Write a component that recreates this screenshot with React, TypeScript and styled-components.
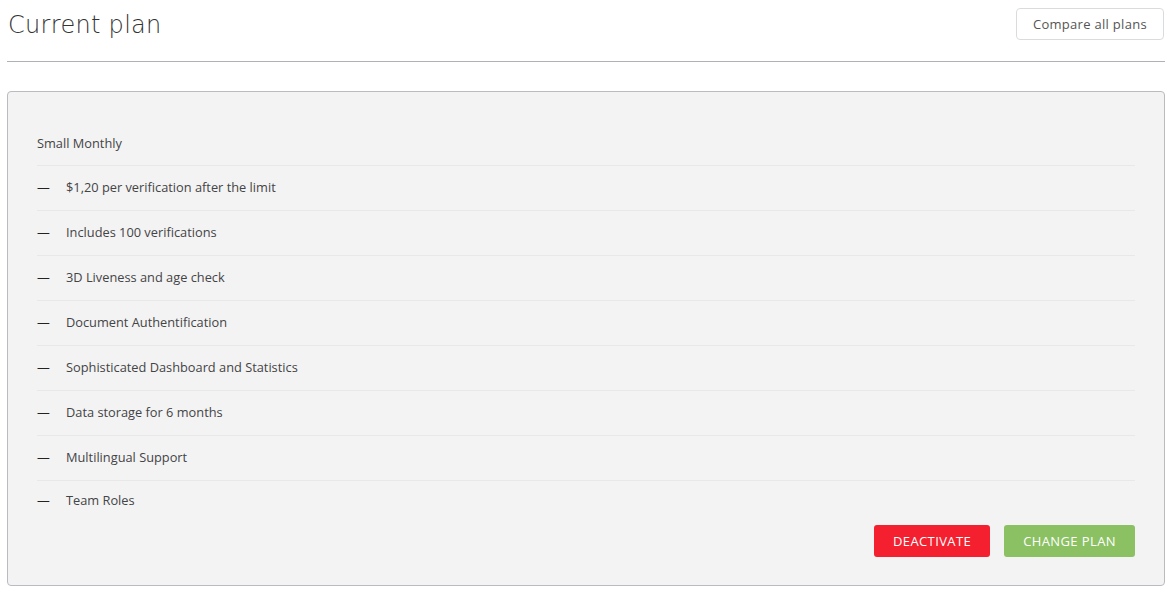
import React from 'react';
import styled, { createGlobalStyle } from 'styled-components';

const GlobalStyle = createGlobalStyle`
  html, body {
    margin: 0;
    padding: 0;
    background: #ffffff;
    font-family: 'Open Sans', 'DejaVu Sans', sans-serif;
    color: #444;
  }
`;

const Page = styled.div`
  padding: 0 7px;
`;

const Header = styled.div`
  display: flex;
  justify-content: space-between;
  align-items: flex-start;
  padding: 8px 1px 0 1px;
  height: 53px;
  border-bottom: 1px solid #aeb2b6;
`;

const Title = styled.h1`
  margin: 0;
  margin-top: 3px;
  font-family: 'DejaVu Sans', sans-serif;
  font-size: 24px;
  font-weight: 300;
  color: #333;
  letter-spacing: 0.3px;
`;

const OutlineButton = styled.button`
  height: 32px;
  padding: 0 16px;
  background: #fff;
  border: 1px solid #d9dcdf;
  border-radius: 4px;
  font-family: inherit;
  font-size: 13px;
  color: #555;
  letter-spacing: 0.3px;
  cursor: pointer;
`;

const Card = styled.div`
  margin-top: 29px;
  background: #f3f3f4;
  border: 1px solid #b8bcc0;
  border-radius: 4px;
  padding: 29px 29px 28px 29px;
`;

const Row = styled.div<{ $last?: boolean; $lift?: number }>`
  display: flex;
  align-items: center;
  height: ${(p) => (p.$last ? 40 : 45)}px;
  padding-bottom: ${(p) => p.$lift ?? 1}px;
  border-bottom: ${(p) => (p.$last ? 'none' : '1px solid #e8e8e9')};
  font-size: 12.8px;
  color: #444;
  box-sizing: border-box;
`;

const Dash = styled.span`
  width: 29px;
  color: #222;
`;

const Actions = styled.div`
  display: flex;
  justify-content: flex-end;
  gap: 14px;
  margin-top: 4px;
`;

const ActionButton = styled.button<{ $color: string }>`
  height: 32px;
  padding: 0 19px;
  border: none;
  border-radius: 3px;
  background: ${(p) => p.$color};
  color: #fff;
  font-family: inherit;
  font-size: 13px;
  letter-spacing: 0.4px;
  text-transform: uppercase;
  cursor: pointer;
`;

const features = [
  '$1,20 per verification after the limit',
  'Includes 100 verifications',
  '3D Liveness and age check',
  'Document Authentification',
  'Sophisticated Dashboard and Statistics',
  'Data storage for 6 months',
  'Multilingual Support',
  'Team Roles',
];

function App(): JSX.Element {
  return (
    <Page>
      <GlobalStyle />
      <Header>
        <Title>Current plan</Title>
        <OutlineButton>Compare all plans</OutlineButton>
      </Header>
      <Card>
        <Row>Small Monthly</Row>
        {features.map((f, i) => (
          <Row key={f} $lift={3} $last={i === features.length - 1}>
            <Dash>—</Dash>
            {f}
          </Row>
        ))}
        <Actions>
          <ActionButton $color="#f41f2f">Deactivate</ActionButton>
          <ActionButton $color="#8bc163">Change plan</ActionButton>
        </Actions>
      </Card>
    </Page>
  );
}

export default App;
